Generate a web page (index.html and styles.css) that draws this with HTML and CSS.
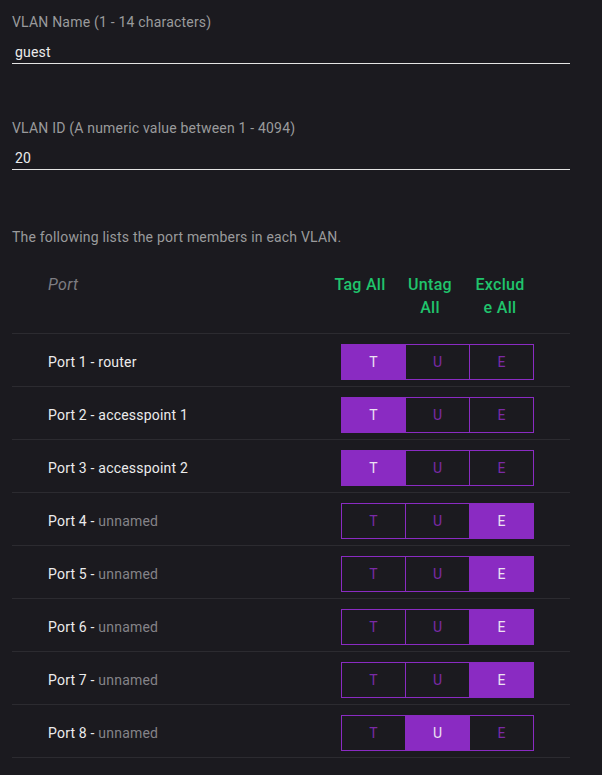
FILE: index.html
```html
<!DOCTYPE html>
<html lang="en">
<head>
    <meta charset="UTF-8">
    <meta name="viewport" content="width=device-width, initial-scale=1.0">
    <title>VLAN Settings</title>
    <link rel="stylesheet" href="styles.css">
</head>
<body>
    <div class="vlan-form">
        <!-- VLAN name / id -->
        <div class="field">
            <label for="vlanName">VLAN Name (1 - 14 characters)</label>
            <input type="text" id="vlanName" value="guest">
        </div>
        <div class="field">
            <label for="vlanId">VLAN ID (A numeric value between 1 - 4094)</label>
            <input type="text" id="vlanId" value="20">
        </div>

        <p class="intro">The following lists the port members in each VLAN.</p>

        <!-- Port membership -->
        <div class="ports">
            <div class="ports-head">
                <div class="col-port">Port</div>
                <div class="col-all">Tag All</div>
                <div class="col-all">Untag All</div>
                <div class="col-all">Exclude All</div>
            </div>

            <div class="port-row">
                <div class="port-name">Port 1 - router</div>
                <div class="toggle">
                    <button class="on">T</button><button>U</button><button>E</button>
                </div>
            </div>
            <div class="port-row">
                <div class="port-name">Port 2 - accesspoint 1</div>
                <div class="toggle">
                    <button class="on">T</button><button>U</button><button>E</button>
                </div>
            </div>
            <div class="port-row">
                <div class="port-name">Port 3 - accesspoint 2</div>
                <div class="toggle">
                    <button class="on">T</button><button>U</button><button>E</button>
                </div>
            </div>
            <div class="port-row">
                <div class="port-name">Port 4 - <span class="unnamed">unnamed</span></div>
                <div class="toggle">
                    <button>T</button><button>U</button><button class="on">E</button>
                </div>
            </div>
            <div class="port-row">
                <div class="port-name">Port 5 - <span class="unnamed">unnamed</span></div>
                <div class="toggle">
                    <button>T</button><button>U</button><button class="on">E</button>
                </div>
            </div>
            <div class="port-row">
                <div class="port-name">Port 6 - <span class="unnamed">unnamed</span></div>
                <div class="toggle">
                    <button>T</button><button>U</button><button class="on">E</button>
                </div>
            </div>
            <div class="port-row">
                <div class="port-name">Port 7 - <span class="unnamed">unnamed</span></div>
                <div class="toggle">
                    <button>T</button><button>U</button><button class="on">E</button>
                </div>
            </div>
            <div class="port-row">
                <div class="port-name">Port 8 - <span class="unnamed">unnamed</span></div>
                <div class="toggle">
                    <button>T</button><button class="on">U</button><button>E</button>
                </div>
            </div>
        </div>
    </div>
</body>
</html>
```

FILE: styles.css
```css
body {
    margin: 0;
    background: #1b1a1f;
    font-family: Roboto, "Liberation Sans", sans-serif;
    font-size: 14px;
    letter-spacing: 0.2px;
    color: #e6e6e6;
}
.vlan-form {
    padding: 12px 32px 0 12px;
}
.field {
    margin-bottom: 54px;
}
.field label {
    display: block;
    line-height: 20px;
    color: #9a9a9c;
}
.field input {
    display: block;
    width: 100%;
    box-sizing: border-box;
    margin-top: 9px;
    height: 23px;
    padding: 0 3px;
    background: transparent;
    border: none;
    border-bottom: 1px solid #e4e4e4;
    color: #ececec;
    font-family: inherit;
    font-size: 14px;
    letter-spacing: inherit;
    outline: none;
}
.field:nth-child(2) {
    margin-bottom: 57px;
}
.intro {
    margin: 0 0 10px;
    line-height: 20px;
    color: #9a9a9c;
}
.ports-head {
    display: grid;
    grid-template-columns: 1fr 70px 70px 70px 35px;
    padding: 16px 0 14px;
    border-bottom: 1px solid #2c2b30;
    font-size: 16px;
    line-height: 23px;
    letter-spacing: 0.3px;
}
.col-port {
    padding-left: 36px;
    font-style: italic;
    color: #7e7d82;
}
.col-all {
    padding: 0 8px;
    text-align: center;
    font-weight: 500;
    color: #20c46c;
    overflow-wrap: anywhere;
}
.port-row {
    display: flex;
    align-items: center;
    padding: 10px 36px 6px 36px;
    border-bottom: 1px solid #2c2b30;
}
.port-name {
    flex: 1;
    color: #ececec;
}
.unnamed {
    color: #848388;
}
.toggle {
    display: flex;
}
.toggle button {
    width: 65px;
    height: 36px;
    margin: 0;
    padding: 0;
    background: transparent;
    border: 1px solid #8a2bc2;
    color: #7a2aa6;
    font-family: inherit;
    font-size: 14px;
    cursor: pointer;
}
.toggle button + button {
    margin-left: -1px;
}
.toggle button.on {
    background: #8a2bc2;
    color: #ece2f2;
}
```
